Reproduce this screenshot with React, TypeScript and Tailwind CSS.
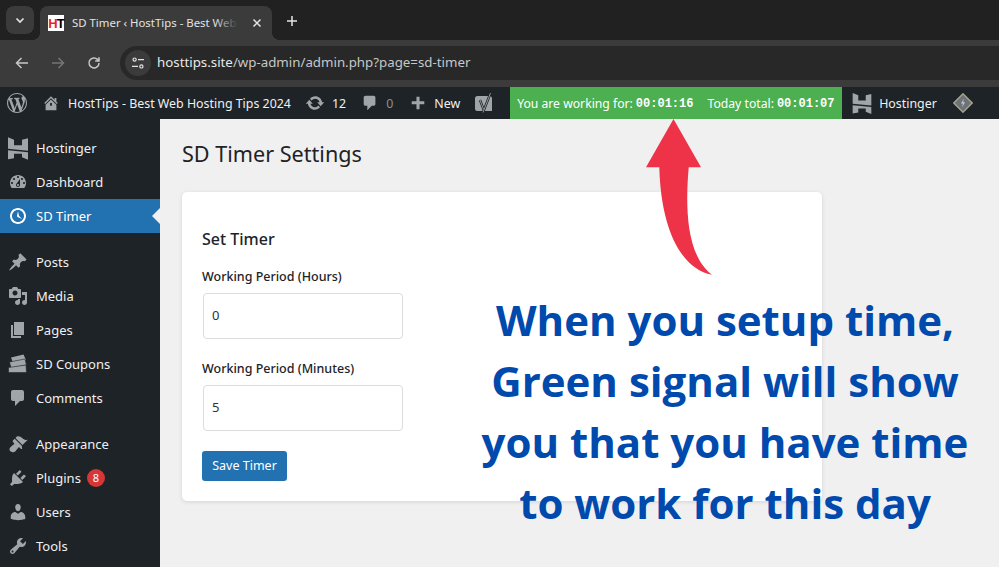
import React from "react";

const P: Record<string, string> = {
  dashboard: "M3.76 16h12.48c1.1-1.37 1.76-3.11 1.76-5 0-4.42-3.58-8-8-8s-8 3.58-8 8c0 1.89.66 3.63 1.76 5zM10 4c.55 0 1 .45 1 1s-.45 1-1 1-1-.45-1-1 .45-1 1-1zM6 6c.55 0 1 .45 1 1s-.45 1-1 1-1-.45-1-1 .45-1 1-1zm8 0c.55 0 1 .45 1 1s-.45 1-1 1-1-.45-1-1 .45-1 1-1zm-5.37 5.55L12 7v6c0 1.1-.9 2-2 2s-2-.9-2-2c0-.57.24-1.08.63-1.45zM4 10c.55 0 1 .45 1 1s-.45 1-1 1-1-.45-1-1 .45-1 1-1zm12 0c.55 0 1 .45 1 1s-.45 1-1 1-1-.45-1-1 .45-1 1-1zm-5 3c0-.55-.45-1-1-1s-1 .45-1 1 .45 1 1 1 1-.45 1-1z",
  post: "M10.44 3.02l1.82-1.82 6.36 6.35-1.83 1.82c-1.05-.68-2.48-.57-3.41.36l-.75.75c-.92.93-1.04 2.35-.35 3.41l-1.83 1.82-2.41-2.41-2.8 2.79c-.42.42-3.38 2.71-3.8 2.29s1.86-3.39 2.28-3.81l2.79-2.79L4.1 9.36l1.83-1.82c1.05.69 2.48.57 3.4-.36l.75-.75c.93-.92 1.05-2.35.36-3.41z",
  media: "M13 11V4c0-.55-.45-1-1-1h-1.67L9 1H5L3.67 3H2c-.55 0-1 .45-1 1v7c0 .55.45 1 1 1h10c.55 0 1-.45 1-1zM7 4.5c1.38 0 2.5 1.12 2.5 2.5S8.38 9.5 7 9.5 4.5 8.38 4.5 7 5.62 4.5 7 4.5zM14 6h5v10.5c0 1.38-1.12 2.5-2.5 2.5S14 17.88 14 16.5s1.12-2.5 2.5-2.5c.17 0 .34.02.5.05V9h-3V6zm-4 8.05V13h2v3.5c0 1.38-1.12 2.5-2.5 2.5S7 17.88 7 16.5 8.12 14 9.5 14c.17 0 .34.02.5.05z",
  page: "M6 15V2h10v13H6zm-1 1h8v2H3V5h2v11z",
  comment: "M5 2h9c1.1 0 2 .9 2 2v7c0 1.1-.9 2-2 2h-2l-5 5v-5H5c-1.1 0-2-.9-2-2V4c0-1.1.9-2 2-2z",
  appearance: "M14.48 11.06L7.41 3.99l1.5-1.5c.5-.56 2.3-.47 3.51.32 1.21.8 1.43 1.28 2.91 2.1 1.18.64 2.45 1.26 4.45.85zm-.71.71L6.7 4.7 4.93 6.47c-.39.39-.39 1.02 0 1.41l1.06 1.06c.39.39.39 1.03 0 1.42-.6.6-1.43 1.11-2.21 1.69-.35.26-.7.53-1.01.84C1.43 13.23.95 15.91 2.3 17.26l.09.09c1.35 1.35 4.03.87 5.37-.47.31-.31.58-.66.84-1.01.58-.78 1.09-1.61 1.69-2.21.39-.39 1.03-.39 1.42 0l1.06 1.06c.39.39 1.02.39 1.41 0z",
  plugins: "M13.11 4.36L9.87 7.6 8 5.73l3.24-3.24c.35-.34 1.05-.2 1.56.32.52.51.66 1.21.31 1.55zm-8 1.77l.91-1.12 9.01 9.01-1.19.84c-.71.71-2.63 1.16-3.82 1.16H6.14L4.9 17.26c-.59.59-1.54.59-2.12 0-.59-.58-.59-1.53 0-2.12l1.24-1.24v-3.88c0-1.13.4-3.19 1.09-3.89zm7.26 3.97l3.24-3.24c.34-.35 1.04-.21 1.55.31.52.51.66 1.21.31 1.55l-3.24 3.25z",
  users: "M10 9.25c-2.27 0-2.73-3.44-2.73-3.44C7 4.02 7.82 2 9.97 2c2.16 0 2.98 2.02 2.71 3.81 0 0-.41 3.44-2.68 3.44zm0 2.57L12.72 10c2.39 0 4.52 2.33 4.52 4.53v2.49s-3.65 1.13-7.24 1.13c-3.65 0-7.24-1.13-7.24-1.13v-2.49c0-2.25 1.94-4.48 4.47-4.48z",
  tools: "M16.68 9.77c-1.34 1.34-3.3 1.67-4.95.99l-5.41 6.52c-.99.99-2.59.99-3.58 0s-.99-2.59 0-3.57l6.52-5.42c-.68-1.65-.35-3.61.99-4.95 1.28-1.28 3.12-1.62 4.72-1.06l-2.89 2.89 2.82 2.82 2.86-2.87c.53 1.58.18 3.39-1.08 4.65zM3.81 16.21c.4.39 1.04.39 1.43 0 .4-.4.4-1.04 0-1.43-.39-.4-1.03-.4-1.43 0-.39.39-.39 1.03 0 1.43z",
  home: "M16 8.5l1.53 1.53-1.06 1.06L10 4.62l-6.47 6.47-1.06-1.06L10 2.5l4 4v-2h2v4zm-6-2.46l6 5.99V18H4v-6.03zM9 13h2v-3H9v3z",
  update: "M10.2 3.28c3.53 0 6.43 2.61 6.92 6h2.08l-3.5 4-3.5-4h2.32c-.45-1.97-2.21-3.45-4.32-3.45-1.45 0-2.73.71-3.54 1.78L4.95 5.66C6.23 4.2 8.11 3.28 10.2 3.28zm-.4 13.44c-3.52 0-6.43-2.61-6.92-6H.8l3.5-4c1.17 1.33 2.33 2.67 3.5 4H5.48c.45 1.97 2.21 3.45 4.32 3.45 1.45 0 2.73-.71 3.54-1.78l1.71 1.95c-1.28 1.46-3.15 2.38-5.25 2.38z",
  plus: "M17 8v3.4h-5.3V17H8.3v-5.6H3V8h5.3V3h3.4v5z",
  clock: "M10 2c4.42 0 8 3.58 8 8s-3.58 8-8 8-8-3.58-8-8 3.58-8 8-8zm0 14c3.31 0 6-2.69 6-6s-2.69-6-6-6-6 2.69-6 6 2.69 6 6 6zm-.71-5.29c.07.05.14.1.23.15l-.02.02L14 13l-3.03-3.19L10 5l-.97 4.81h.01c0 .02-.01.05-.02.09S9 9.97 9 10c0 .28.1.52.29.71z",
  wp: "M20 10c0-5.51-4.49-10-10-10C4.48 0 0 4.49 0 10c0 5.52 4.48 10 10 10 5.51 0 10-4.48 10-10zM7.78 15.37L4.37 6.22c.55-.02 1.17-.08 1.17-.08.5-.06.44-1.13-.06-1.11 0 0-1.45.11-2.37.11-.18 0-.37 0-.58-.01C4.12 2.69 6.87 1.11 10 1.11c2.33 0 4.45.87 6.05 2.34-.68-.11-1.65.39-1.65 1.58 0 .74.45 1.36.9 2.1.35.61.55 1.36.55 2.46 0 1.49-1.4 5-1.4 5l-3.03-8.37c.54-.02.82-.17.82-.17.5-.05.44-1.25-.06-1.22 0 0-1.44.12-2.38.12-.87 0-2.33-.12-2.33-.12-.5-.03-.56 1.2-.06 1.22l.92.08 1.26 3.41zM17.41 10c.24-.64.74-1.87.43-4.25.7 1.29 1.05 2.71 1.05 4.25 0 3.29-1.73 6.24-4.4 7.78.97-2.59 1.94-5.2 2.92-7.78zM6.1 18.09C3.12 16.65 1.11 13.53 1.11 10c0-1.3.23-2.48.72-3.59C3.25 10.3 4.67 14.2 6.1 18.09zm4.03-6.63l2.58 6.98c-.86.29-1.76.45-2.71.45-.79 0-1.57-.11-2.29-.33.81-2.38 1.62-4.74 2.42-7.1z",
};

const GREY = "#a0a5aa";

function Dash({ n, size = 20, color = GREY }: { n: string; size?: number; color?: string }) {
  return (
    <svg width={size} height={size} viewBox="0 0 20 20" fill={color} className="shrink-0">
      <path d={P[n]} />
    </svg>
  );
}

function HLogo({ w = 20, h = 23 }: { w?: number; h?: number }) {
  return (
    <svg width={w} height={h} viewBox="0 0 20 22.5" fill={GREY} className="shrink-0">
      <polygon points="0,0 6,2.5 6,8 14,8 14,2.5 20,1 20,13.5 0,11.5" />
      <polygon points="0,13 20,15 20,22.5 14,20 14,16.5 6,16.5 6,21 0,22" />
    </svg>
  );
}

function Coupons() {
  return (
    <svg width="20" height="20" viewBox="0 0 20 20" className="shrink-0">
      <polygon points="3,3.5 15.5,0.5 18,6 5,9" fill={GREY} />
      <polygon points="1.5,8 17,5 18.5,11 3,14" fill={GREY} stroke="#1d2327" strokeWidth="0.6" />
      <polygon points="0.5,13.5 18,11 18.5,18.5 0.5,18.5" fill={GREY} stroke="#1d2327" strokeWidth="0.6" />
    </svg>
  );
}

function Yoast() {
  return (
    <svg width="20" height="22" viewBox="0 0 20 22" className="shrink-0">
      <path d="M2.5 4h12a2.5 2.5 0 0 1 2.5 2.5V19H2.5A2.5 2.5 0 0 1 0 16.5v-10A2.5 2.5 0 0 1 2.5 4z" fill={GREY} />
      <path d="M5 8l3.6 9.5M15.5 1 8 20.5" fill="none" stroke="#1d2327" strokeWidth="2.4" />
      <path d="M5 8l3.6 9.5M15.5 1 8 20.5" fill="none" stroke={GREY} strokeWidth="0.9" />
    </svg>
  );
}

function Diamond() {
  return (
    <svg width="20" height="20" viewBox="0 0 20 20" className="shrink-0">
      <rect x="3.5" y="3.5" width="13" height="13" transform="rotate(45 10 10)" fill="#6d7278" stroke="#a8a48c" strokeWidth="1.4" />
      <path d="M11 5.5 8 10.5h2l-1 4 3-5.2h-2z" fill="#c8ccd0" />
    </svg>
  );
}

type Item = { label: string; icon: React.ReactNode; active?: boolean; badge?: string };

const groups: Item[][] = [
  [
    { label: "Hostinger", icon: <HLogo /> },
    { label: "Dashboard", icon: <Dash n="dashboard" /> },
    { label: "SD Timer", icon: <Dash n="clock" color="#ffffff" />, active: true },
  ],
  [
    { label: "Posts", icon: <Dash n="post" /> },
    { label: "Media", icon: <Dash n="media" /> },
    { label: "Pages", icon: <Dash n="page" /> },
    { label: "SD Coupons", icon: <Coupons /> },
    { label: "Comments", icon: <Dash n="comment" /> },
  ],
  [
    { label: "Appearance", icon: <Dash n="appearance" /> },
    { label: "Plugins", icon: <Dash n="plugins" />, badge: "8" },
    { label: "Users", icon: <Dash n="users" /> },
    { label: "Tools", icon: <Dash n="tools" /> },
  ],
];

const UI = "font-['Noto_Sans',sans-serif]";

function Field({ label, value, mt }: { label: string; value: string; mt: string }) {
  return (
    <div className={mt}>
      <div className="text-[12.5px] leading-[18px] font-medium text-[#1d2327]">{label}</div>
      <div className="mt-[7px] ml-px flex h-[46px] w-[200px] items-center rounded-[4px] border border-[#dcdcde] bg-white pl-2 text-[13px] text-[#2c3338]">
        {value}
      </div>
    </div>
  );
}

export default function App() {
  return (
    <div className={`relative flex h-[567px] w-[999px] flex-col overflow-hidden bg-[#f0f0f1] ${UI}`}>
      {/* Browser tab strip */}
      <div className="flex h-10 shrink-0 items-end bg-[#202120] pl-1.5">
        <div className="mb-1.5 flex h-7 w-7 items-center justify-center rounded-lg bg-[#3b3b3b]">
          <svg width="12" height="12" viewBox="0 0 12 12" fill="none" stroke="#e3e3e3" strokeWidth="1.7">
            <path d="M2.5 4.5 6 8l3.5-3.5" />
          </svg>
        </div>
        <div className="relative ml-1.5 flex h-[34px] w-[232px] items-center rounded-t-lg bg-[#3b3b3b] pl-2">
          <div className="absolute -left-2 bottom-0 h-2 w-2 bg-[radial-gradient(circle_at_0_0,transparent_8px,#3b3b3b_8px)]" />
          <div className="absolute -right-2 bottom-0 h-2 w-2 bg-[radial-gradient(circle_at_100%_0,transparent_8px,#3b3b3b_8px)]" />
          <div className="flex h-4 w-4 items-center justify-center bg-white font-['Liberation_Sans',sans-serif] text-[13px] leading-none font-bold tracking-[-1px]">
            <span className="text-[#e8232b]">H</span>
            <span className="text-black">T</span>
          </div>
          <div className="relative ml-2 w-[166px] text-[11.4px] whitespace-nowrap text-[#e3e3e3]">
            SD Timer ‹ HostTips - Best Web
            <div className="absolute top-0 right-0 h-full w-6 bg-gradient-to-r from-transparent to-[#3b3b3b]" />
          </div>
          <svg width="10" height="10" viewBox="0 0 10 10" stroke="#e3e3e3" strokeWidth="1.5" className="ml-3.5">
            <path d="M1.5 1.5l7 7M8.5 1.5l-7 7" />
          </svg>
        </div>
        <svg width="12" height="12" viewBox="0 0 12 12" stroke="#e3e3e3" strokeWidth="1.5" className="mb-[13px] ml-[14px]">
          <path d="M6 1v10M1 6h10" />
        </svg>
      </div>

      {/* Browser toolbar */}
      <div className="flex h-[47px] shrink-0 bg-[#3b3b3b] pt-1.5 pb-[7px]">
        <div className="flex w-[120px] shrink-0 items-center pl-[14px]">
          <svg width="16" height="16" viewBox="0 0 16 16" fill="none" stroke="#c7c7c7" strokeWidth="1.5">
            <path d="M14 8H2.5M7.5 3 2.5 8l5 5" />
          </svg>
          <svg width="16" height="16" viewBox="0 0 16 16" fill="none" stroke="#757575" strokeWidth="1.5" className="ml-[20px]">
            <path d="M2 8h11.5M8.5 3l5 5-5 5" />
          </svg>
          <svg width="16" height="16" viewBox="0 0 16 16" fill="none" stroke="#c7c7c7" strokeWidth="1.5" className="ml-[20px]">
            <path d="M13 8a5 5 0 1 1-1.5-3.6L13 6M13 2.2V6H9.2" />
          </svg>
        </div>
        <div className="flex flex-1 items-center rounded-l-[17px] bg-[#282828] pl-[5px]">
          <div className="flex h-[26px] w-[26px] items-center justify-center rounded-full bg-[#3b3b3b]">
            <svg width="14" height="14" viewBox="0 0 14 14" fill="none" stroke="#e3e3e3" strokeWidth="1.2">
              <circle cx="3.6" cy="3.6" r="1.6" />
              <path d="M7 3.6h6M1 10.4h6" />
              <circle cx="10.4" cy="10.4" r="1.6" />
            </svg>
          </div>
          <div className="ml-1.5 text-[13.3px] text-[#c7c7c7]">
            <span className="text-[#e8e8e8]">hosttips.site</span>/wp-admin/admin.php?page=sd-timer
          </div>
        </div>
      </div>

      {/* WP admin bar */}
      <div className="flex h-8 shrink-0 items-center bg-[#1d2327] text-[12.4px] text-[#f0f0f1]">
        <div className="ml-[7px]"><Dash n="wp" /></div>
        <div className="ml-[15px]"><Dash n="home" size={18} /></div>
        <span className="mt-0.5 ml-[8px]">HostTips - Best Web Hosting Tips 2024</span>
        <div className="ml-[14px]"><Dash n="update" /></div>
        <span className="mt-0.5 ml-[7px]">12</span>
        <div className="ml-[15px]"><Dash n="comment" size={18} /></div>
        <span className="mt-0.5 ml-[7px] text-[#8c8f94]">0</span>
        <div className="ml-4"><Dash n="plus" size={18} /></div>
        <span className="mt-0.5 ml-[7px]">New</span>
        <div className="ml-[15px]"><Yoast /></div>
        <div className="ml-[15px] flex h-full w-[332px] items-center bg-[#4caf50] pt-0.5 pl-[7px] text-[12.2px] text-white">
          <span>You are working for:</span>
          <span className="ml-[3px] font-['Liberation_Mono',monospace] text-[12px] font-bold">00:01:16</span>
          <span className="ml-3.5">Today total:</span>
          <span className="ml-[3px] font-['Liberation_Mono',monospace] text-[12px] font-bold">00:01:07</span>
        </div>
        <div className="ml-[10px]"><HLogo h={21} /></div>
        <span className="mt-0.5 ml-[7px]">Hostinger</span>
        <div className="ml-[16px]"><Diamond /></div>
      </div>

      <div className="flex min-h-0 flex-1">
        {/* Sidebar */}
        <aside className="flex w-40 shrink-0 flex-col gap-3 bg-[#1d2327] pt-3 text-[13px] text-[#f0f0f1]">
          {groups.map((g, i) => (
            <div key={i} className="flex flex-col">
              {g.map((it) => (
                <div
                  key={it.label}
                  className={`relative flex h-[34px] shrink-0 items-center pl-2 ${it.active ? "bg-[#2271b1] text-white" : ""}`}
                >
                  {it.icon}
                  <span className="mt-0.5 ml-2">{it.label}</span>
                  {it.badge && (
                    <span className="ml-[6px] flex h-[18px] w-[18px] items-center justify-center rounded-full bg-[#d63638] text-[11px] text-white">
                      {it.badge}
                    </span>
                  )}
                  {it.active && (
                    <span className="absolute top-1/2 right-0 -translate-y-1/2 border-y-[8px] border-r-[8px] border-y-transparent border-r-[#f0f0f1]" />
                  )}
                </div>
              ))}
            </div>
          ))}
        </aside>

        {/* Main content */}
        <main className="flex-1 pl-[22px]">
          <h1 className="mt-[21px] text-[21.6px] leading-[28px] text-[#1d2327]">SD Timer Settings</h1>
          <section className="mt-[24px] h-[309px] w-[640px] rounded-[5px] bg-white px-5 pt-[34px] shadow-[0_1px_4px_rgba(0,0,0,0.12)]">
            <h2 className="text-[16px] leading-[26px] font-medium text-[#1d2327]">Set Timer</h2>
            <Field label="Working Period (Hours)" value="0" mt="mt-[16px]" />
            <Field label="Working Period (Minutes)" value="5" mt="mt-[21px]" />
            <button className="mt-5 flex h-[30px] w-[85px] items-center justify-center rounded-[3px] bg-[#2271b1] text-[12.5px] text-white">
              Save Timer
            </button>
          </section>
        </main>
      </div>

      {/* Annotation overlay */}
      <svg width="68" height="157" viewBox="0 0 68 157" className="absolute top-[119px] left-[646px]">
        <path d="M27.5 0 55 48.3H42.7C40 80 38 135 66 155.7 35 150 15 110 13.3 48.3H0Z" fill="#ee3248" />
      </svg>
      <div className="absolute top-[289px] left-[450px] w-[550px] text-center font-['Open_Sans',sans-serif] text-[42px] leading-[61px] font-bold text-[#004aad]">
        <div>When you setup time,</div>
        <div>Green signal will show</div>
        <div>you that you have time</div>
        <div>to work for this day</div>
      </div>
    </div>
  );
}
